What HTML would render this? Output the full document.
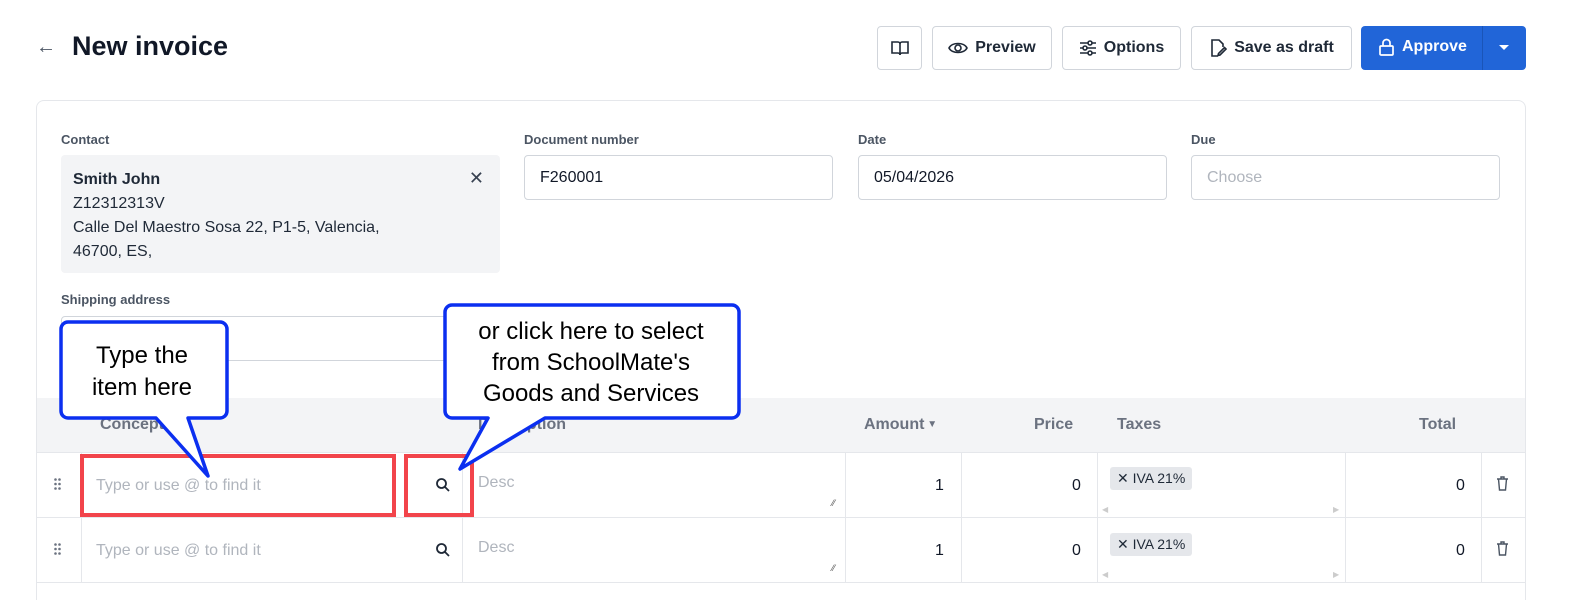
<!DOCTYPE html>
<html><head><meta charset="utf-8"><style>
*{box-sizing:border-box;margin:0;padding:0}
html,body{width:1587px;height:600px;overflow:hidden}
body{background:#fff;font-family:"Liberation Sans",sans-serif;color:#111827;position:relative}
.a{position:absolute}
.btn{position:absolute;top:26px;height:44px;border:1px solid #d1d5db;border-radius:4px;background:#fff;display:flex;align-items:center;justify-content:center;gap:7px;font-size:16px;font-weight:bold;color:#1f2937}
.lbl{position:absolute;font-size:13px;font-weight:bold;color:#4b5563}
.inp{position:absolute;height:45px;border:1px solid #d1d5db;border-radius:4px;font-size:16px;padding:13px 15px;color:#111827}
.th{position:absolute;top:416px;font-size:16px;font-weight:bold;color:#6b7280}
.vl{position:absolute;width:1px;background:#e5e7eb}
.hl{position:absolute;height:1px;background:#e5e7eb;left:37px;width:1488px}
.ph{position:absolute;font-size:16px;color:#b0b5bd}
.num{position:absolute;font-size:16px;color:#111827}
.tag{position:absolute;height:23px;background:#e5e7eb;border-radius:3px;font-size:14px;padding:3px 7px 0 7px;color:#1f2937}
</style></head><body>
<div class="a" style="left:36px;top:36px;font-size:20px;color:#4b5563">←</div>
<div class="a" style="left:72px;top:31px;font-size:27px;font-weight:bold">New invoice</div>

<div class="btn" style="left:877px;width:45px"><svg width="18" height="16" viewBox="0 0 18 16" fill="none" stroke="#1f2937" stroke-width="1.6"><path d="M1 2h6a2 2 0 012 2v11a2 2 0 00-2-2H1zM17 2h-6a2 2 0 00-2 2v11a2 2 0 012-2h6z"/></svg></div>
<div class="btn" style="left:932px;width:120px"><svg width="20" height="14" viewBox="0 0 20 14" fill="none" stroke="#1f2937" stroke-width="1.6"><path d="M1 7C4 1 16 1 19 7C16 13 4 13 1 7z"/><circle cx="10" cy="7" r="3"/></svg>Preview</div>
<div class="btn" style="left:1062px;width:119px"><svg width="18" height="16" viewBox="0 0 18 16" fill="none" stroke="#1f2937" stroke-width="1.6"><path d="M1 3h16M1 8h16M1 13h16"/><circle cx="11" cy="3" r="2" fill="#fff"/><circle cx="6" cy="8" r="2" fill="#fff"/><circle cx="11" cy="13" r="2" fill="#fff"/></svg>Options</div>
<div class="btn" style="left:1191px;width:161px"><svg width="18" height="18" viewBox="0 0 18 18" fill="none" stroke="#1f2937" stroke-width="1.6"><path d="M9 17H3V1h7l4 4v3M17 10l-6 6-2 .5.5-2 6-6z"/></svg>Save as draft</div>
<div class="a" style="left:1361px;top:26px;width:165px;height:44px;background:#2165d8;border-radius:4px;color:#fff;font-size:16px;font-weight:bold">
<div class="a" style="left:18px;top:12px;display:flex;gap:8px;align-items:center"><svg width="15" height="18" viewBox="0 0 15 18" fill="none" stroke="#fff" stroke-width="1.7"><rect x="1" y="8" width="13" height="9" rx="1"/><path d="M4 8V5a3.5 3.5 0 017 0v3"/></svg>Approve</div>
<div class="a" style="left:121px;top:0;width:1px;height:44px;background:#1a55b8"></div>
<div class="a" style="left:138px;top:19px;width:0;height:0;border-left:5px solid transparent;border-right:5px solid transparent;border-top:5px solid #fff"></div>
</div>

<div class="a" style="left:36px;top:100px;width:1490px;height:500px;border:1px solid #e5e7eb;border-bottom:none;border-radius:8px 8px 0 0"></div>

<div class="lbl" style="left:61px;top:132px">Contact</div>
<div class="a" style="left:61px;top:155px;width:439px;height:118px;background:#f3f4f6;border-radius:4px;padding:13px 12px;font-size:16px;line-height:24px;color:#1f2937">
<b>Smith John</b><br>Z12312313V<br>Calle Del Maestro Sosa 22, P1-5, Valencia,<br>46700, ES,
<div class="a" style="right:16px;top:11px;font-size:18px;color:#374151">✕</div></div>
<div class="lbl" style="left:524px;top:132px">Document number</div>
<div class="inp" style="left:524px;top:155px;width:309px">F260001</div>
<div class="lbl" style="left:858px;top:132px">Date</div>
<div class="inp" style="left:858px;top:155px;width:309px">05/04/2026</div>
<div class="lbl" style="left:1191px;top:132px">Due</div>
<div class="inp" style="left:1191px;top:155px;width:309px;color:#b0b5bd">Choose</div>

<div class="lbl" style="left:61px;top:292px">Shipping address</div>
<div class="inp" style="left:61px;top:316px;width:439px"></div>

<div class="a" style="left:37px;top:398px;width:1488px;height:54px;background:#f3f4f6"></div>
<div class="th" style="left:100px">Concept</div>
<div class="th" style="left:478px">Description</div>
<div class="th" style="left:864px">Amount<span style="font-size:10px;vertical-align:2px"> ▼</span></div>
<div class="th" style="left:1034px">Price</div>
<div class="th" style="left:1117px">Taxes</div>
<div class="th" style="left:1419px">Total</div>

<div class="hl" style="top:452px"></div>
<div class="hl" style="top:517px"></div>
<div class="hl" style="top:582px"></div>
<div class="vl" style="left:81px;top:452px;height:130px"></div>
<div class="vl" style="left:462px;top:452px;height:130px"></div>
<div class="vl" style="left:845px;top:452px;height:130px"></div>
<div class="vl" style="left:961px;top:452px;height:130px"></div>
<div class="vl" style="left:1097px;top:452px;height:130px"></div>
<div class="vl" style="left:1345px;top:452px;height:130px"></div>
<div class="vl" style="left:1481px;top:452px;height:130px"></div>

<svg class="a" style="left:54px;top:478px" width="7" height="12" fill="#6b7280"><circle cx="1.5" cy="1.5" r="1.3"/><circle cx="5.5" cy="1.5" r="1.3"/><circle cx="1.5" cy="6" r="1.3"/><circle cx="5.5" cy="6" r="1.3"/><circle cx="1.5" cy="10.5" r="1.3"/><circle cx="5.5" cy="10.5" r="1.3"/></svg>
<svg class="a" style="left:54px;top:543px" width="7" height="12" fill="#6b7280"><circle cx="1.5" cy="1.5" r="1.3"/><circle cx="5.5" cy="1.5" r="1.3"/><circle cx="1.5" cy="6" r="1.3"/><circle cx="5.5" cy="6" r="1.3"/><circle cx="1.5" cy="10.5" r="1.3"/><circle cx="5.5" cy="10.5" r="1.3"/></svg>
<div class="ph" style="left:96px;top:477px">Type or use @ to find it</div>
<div class="ph" style="left:96px;top:542px">Type or use @ to find it</div>
<svg class="a" style="left:435px;top:477px" width="16" height="16" viewBox="0 0 16 16" fill="none" stroke="#1f2937" stroke-width="1.8"><circle cx="6.5" cy="6.5" r="4.5"/><path d="M10 10l4 4"/></svg>
<svg class="a" style="left:435px;top:542px" width="16" height="16" viewBox="0 0 16 16" fill="none" stroke="#1f2937" stroke-width="1.8"><circle cx="6.5" cy="6.5" r="4.5"/><path d="M10 10l4 4"/></svg>
<div class="ph" style="left:478px;top:474px">Desc</div>
<div class="ph" style="left:478px;top:539px">Desc</div>
<div class="a" style="left:832px;top:498px;font-size:9px;color:#555">⁄⁄</div>
<div class="a" style="left:832px;top:563px;font-size:9px;color:#555">⁄⁄</div>
<div class="num" style="left:935px;top:477px">1</div>
<div class="num" style="left:935px;top:542px">1</div>
<div class="num" style="left:1072px;top:477px">0</div>
<div class="num" style="left:1072px;top:542px">0</div>
<div class="tag" style="left:1110px;top:467px">✕ IVA 21%</div>
<div class="tag" style="left:1110px;top:533px">✕ IVA 21%</div>
<div class="a" style="left:1102px;top:505px;font-size:8px;color:#ccc">◀</div>
<div class="a" style="left:1333px;top:505px;font-size:8px;color:#ccc">▶</div>
<div class="a" style="left:1102px;top:570px;font-size:8px;color:#ccc">◀</div>
<div class="a" style="left:1333px;top:570px;font-size:8px;color:#ccc">▶</div>
<div class="num" style="left:1456px;top:477px">0</div>
<div class="num" style="left:1456px;top:542px">0</div>
<svg class="a" style="left:1496px;top:476px" width="13" height="15" viewBox="0 0 13 15" fill="none" stroke="#4b5563" stroke-width="1.4"><path d="M1 3h11M5 3V1h3v2M2.5 3l1 11h6l1-11"/></svg>
<svg class="a" style="left:1496px;top:541px" width="13" height="15" viewBox="0 0 13 15" fill="none" stroke="#4b5563" stroke-width="1.4"><path d="M1 3h11M5 3V1h3v2M2.5 3l1 11h6l1-11"/></svg>

<svg class="a" style="left:0;top:0" width="1587" height="600">
<rect x="82" y="456" width="312" height="59" fill="none" stroke="#f2444b" stroke-width="4"/>
<rect x="406" y="456" width="66" height="59" fill="none" stroke="#f2444b" stroke-width="4"/>
<path d="M68 322H220a7 7 0 017 7V411a7 7 0 01-7 7H188L208 476L156 418H68a7 7 0 01-7-7V329a7 7 0 017-7z" fill="#fff" stroke="#0b2ff0" stroke-width="3.5" stroke-linejoin="round"/>
<path d="M452 305H732a7 7 0 017 7V411a7 7 0 01-7 7H545L460 469L488 418H452a7 7 0 01-7-7V312a7 7 0 017-7z" fill="#fff" stroke="#0b2ff0" stroke-width="3.5" stroke-linejoin="round"/>
<text x="142" y="363" font-family="Liberation Sans" font-size="24" text-anchor="middle" fill="#000">Type the</text>
<text x="142" y="395" font-family="Liberation Sans" font-size="24" text-anchor="middle" fill="#000">item here</text>
<text x="591" y="339" font-family="Liberation Sans" font-size="24" text-anchor="middle" fill="#000">or click here to select</text>
<text x="591" y="370" font-family="Liberation Sans" font-size="24" text-anchor="middle" fill="#000">from SchoolMate's</text>
<text x="591" y="401" font-family="Liberation Sans" font-size="24" text-anchor="middle" fill="#000">Goods and Services</text>
</svg>
</body></html>
